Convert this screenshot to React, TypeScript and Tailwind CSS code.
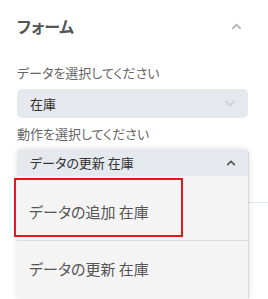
import React from "react";

function Chevron({ up, className }: { up?: boolean; className?: string }) {
  return (
    <svg viewBox="0 0 12 8" className={className} fill="none" stroke="currentColor" strokeWidth="2" strokeLinecap="round" strokeLinejoin="round">
      {up ? <path d="M2 6.5 L6 2.5 L10 6.5" /> : <path d="M2 1.5 L6 5.5 L10 1.5" />}
    </svg>
  );
}

export default function App() {
  return (
    <div className="relative w-[268px] h-[299px] overflow-hidden bg-white font-['Noto_Sans_CJK_JP',_'Noto_Sans',_sans-serif] [font-feature-settings:'palt']">
      <div className="flex items-center justify-between h-[32px] mt-[10px] pl-[17px] pr-[26px]">
        <h2 className="text-[16px] font-bold text-[#555] leading-none">フォーム</h2>
        <Chevron up className="w-[11px] h-[8px] text-[#b3b3b3]" />
      </div>

      <div className="mt-[21px] px-[17px] pr-[20px]">
        <div className="h-[20px] flex items-center text-[13px] text-[#666]">データを選択してください</div>
        <div className="mt-[6px] h-[29px] rounded-[5px] bg-[#e5e8ec] flex items-center justify-between pl-[13px] pr-[12px]">
          <span className="text-[13px] text-[#333]">在庫</span>
          <Chevron className="w-[12px] h-[8px] text-[#cdd1d6]" />
        </div>
        <div className="mt-[6px] h-[20px] flex items-center text-[13px] text-[#666]">動作を選択してください</div>

        <div className="relative mt-[5px]">
          <div className="absolute left-[232px] right-[-20px] top-[53px] h-px bg-[#dfe6ee]" />
          <div className="relative w-[232px] rounded-t-[5px] overflow-hidden border-r border-[#d8d8d8] shadow-[0_0_6px_rgba(0,0,0,0.12)] bg-[#f4f4f4]">
            <div className="h-[27px] bg-[#e5e8ec] flex items-center justify-between pl-[13px] pr-[12px]">
              <span className="text-[13px] text-[#333]">データの更新 在庫</span>
              <Chevron up className="w-[10px] h-[7px] text-[#555]" />
            </div>
            <div className="pt-[8px]">
              <div className="h-[57px] flex items-center pl-[12px] border-b border-[#dcdcdc] text-[15px] text-[#555]">データの追加 在庫</div>
              <div className="h-[57px] flex items-center pl-[12px] text-[15px] text-[#555]">データの更新 在庫</div>
            </div>
          </div>
          <div className="absolute left-[-3px] top-[29px] w-[169px] h-[59px] border-2 border-[#e8161c]" />
        </div>
      </div>
    </div>
  );
}
